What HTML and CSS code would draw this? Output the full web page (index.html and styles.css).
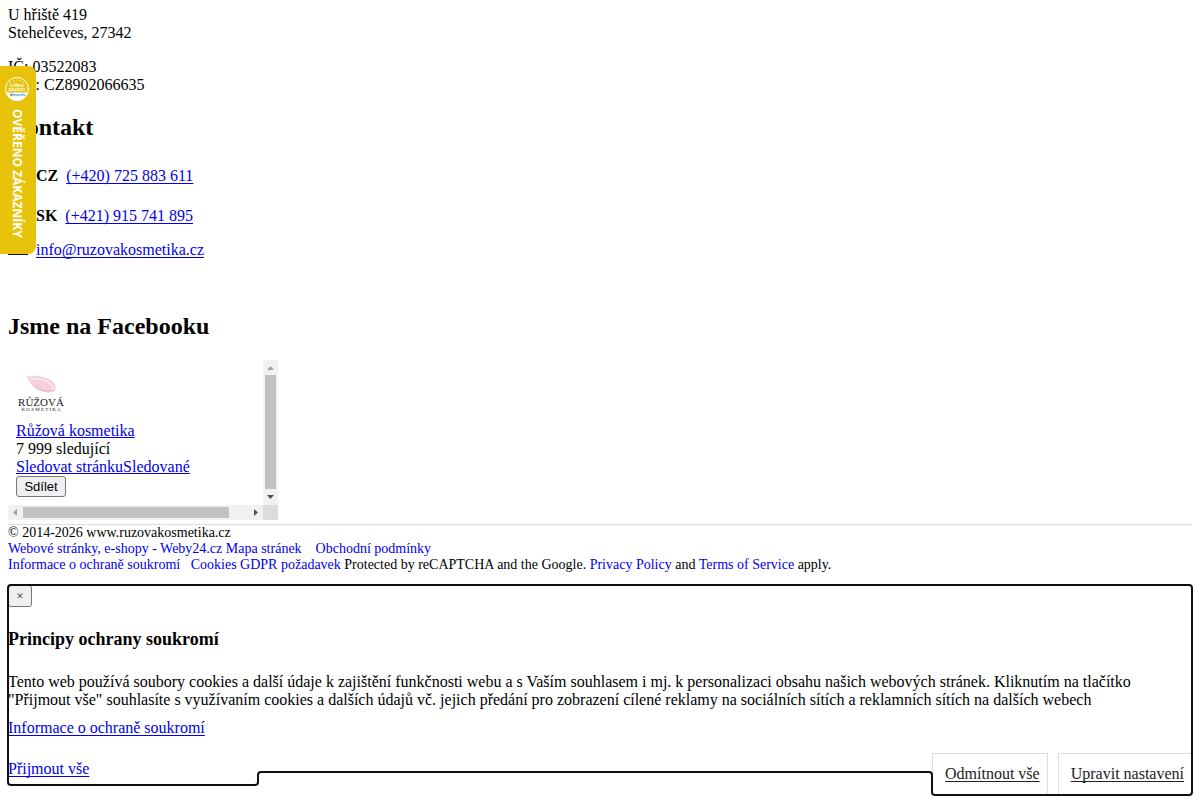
FILE: index.html
```
<!DOCTYPE html>
<html lang="cs">

<head>
    <meta charset="UTF-8">
    <meta name="viewport" content="width=device-width, initial-scale=1.0">
    <title>Růžová kosmetika</title>
    <link rel="stylesheet" href="styles.css">
</head>

<body>
    <section class="company">
        <p>U hřiště 419<br>Stehelčeves, 27342</p>
        <p>IČ: 03522083<br>DIČ: CZ8902066635</p>
    </section>

    <section class="contact">
        <h2>Kontakt</h2>
        <p class="contact-row phone"><span class="icon"></span><strong>CZ</strong><a href="tel:+420725883611">(+420) 725 883 611</a></p>
        <p class="contact-row phone"><span class="icon"></span><strong>SK</strong><a href="tel:+421915741895">(+421) 915 741 895</a></p>
        <p class="contact-row">
            <svg class="icon" viewBox="0 0 20 10" aria-hidden="true"><path d="M0 0h20v10H0z" fill="#111"/><path d="M1 1l9 6 9-6" stroke="#fff" fill="none"/></svg>
            <a href="mailto:info@ruzovakosmetika.cz">info@ruzovakosmetika.cz</a>
        </p>
    </section>

    <section class="facebook">
        <h2>Jsme na Facebooku</h2>
        <div class="fb-frame">
            <div class="fb-content">
                <svg class="fb-logo" viewBox="0 0 50 50" role="img" aria-label="Růžová kosmetika">
                    <path d="M11 8c4 1 7-1 12 0 6 2 10 2 14 6 3 3 4 7 1 9-3 2-8 2-13 0-6-2-9-5-11-9-1-2-3-3-3-6z" fill="#f5cfdb"/>
                    <path d="M14 10c7 2 12 0 18 4 3 2 5 4 5 7" stroke="#fae5ec" stroke-width="2" fill="none"/>
                    <path d="M18 17c6 6 13 7 20 5" stroke="#e9b5c6" fill="none"/>
                    <text x="25" y="38" class="logo-name">RŮŽOVÁ</text>
                    <text x="25" y="43" class="logo-sub">K O S M E T I K A</text>
                </svg>
                <a href="#">Růžová kosmetika</a>
                <div>7 999 sledující</div>
                <div><a href="#">Sledovat stránku</a><a href="#">Sledované</a></div>
                <button type="button">Sdílet</button>
            </div>
            <div class="scroll-y">
                <svg viewBox="0 0 15 15"><path d="M4 10h7L7.500 6z" fill="#a3a3a3"/></svg>
                <span class="thumb"></span>
                <svg viewBox="0 0 15 15"><path d="M4 5h7L7.500 9z" fill="#505050"/></svg>
            </div>
            <div class="scroll-x">
                <svg viewBox="0 0 15 15"><path d="M9 4v7L5 7.500z" fill="#a3a3a3"/></svg>
                <span class="thumb"></span>
                <svg viewBox="0 0 15 15"><path d="M6 4v7l4-3.500z" fill="#505050"/></svg>
            </div>
            <div class="scroll-corner"></div>
        </div>
    </section>

    <footer>
        © 2014-2026 www.ruzovakosmetika.cz<br>
        <a href="#">Webové stránky, e-shopy - Weby24.cz</a> <a href="#">Mapa stránek</a> &nbsp;&nbsp; <a href="#">Obchodní podmínky</a><br>
        <a href="#">Informace o ochraně soukromí</a> &nbsp; <a href="#">Cookies</a> <a href="#">GDPR požadavek</a>
        Protected by reCAPTCHA and the Google. <a href="#">Privacy Policy</a> and <a href="#">Terms of Service</a> apply.
    </footer>

    <div class="cookie-dialog" role="dialog" aria-labelledby="cookieTitle">
        <button type="button" class="close" aria-label="Zavřít">×</button>
        <h3 id="cookieTitle">Principy ochrany soukromí</h3>
        <p>Tento web používá soubory cookies a další údaje k zajištění funkčnosti webu a s Vaším souhlasem i mj. k personalizaci obsahu našich webových stránek. Kliknutím na tlačítko "Přijmout vše" souhlasíte s využívaním cookies a dalších údajů vč. jejich předání pro zobrazení cílené reklamy na sociálních sítích a reklamních sítích na dalších webech</p>
        <a href="#">Informace o ochraně soukromí</a>
        <div class="cookie-actions">
            <div class="accept"><a href="#">Přijmout vše</a></div>
            <div class="options">
                <a href="#">Odmítnout vše</a>
                <a href="#">Upravit nastavení</a>
            </div>
        </div>
    </div>

    <aside class="verified">
        <svg viewBox="0 0 24 24" aria-hidden="true">
            <circle cx="12" cy="12" r="11.500" fill="#e8c30b" stroke="#fff"/>
            <path d="M1 15.500h22a11.500 11.500 0 0 1-22 0z" fill="#fff"/>
            <path d="M5 5.500h1M8 3.500h1M11.500 3h1M15 3.500h1M18 5.500h1" stroke="#fff" stroke-width="1"/>
            <text x="12" y="10" class="seal-text">OVĚŘENO</text>
            <text x="12" y="14" class="seal-text">ZÁKAZNÍKY</text>
            <circle cx="6" cy="18" r="1.200" fill="#f08a24"/>
            <text x="13" y="19" class="seal-brand">Heureka</text>
        </svg>
        <span>OVĚŘENO ZÁKAZNÍKY</span>
    </aside>
</body>

</html>
```
FILE: styles.css
```
body {
    margin: 0;
    padding: 6px 8px 28px;
    font-family: "Liberation Serif", serif;
    font-size: 16px;
    line-height: 18px;
    color: #000;
    background-color: #fff;
}

a {
    color: #0000ee;
}

p {
    margin: 0 0 16px;
}

h2 {
    margin: 20px 0;
    font-size: 24px;
    line-height: 27px;
}

.contact-row {
    display: flex;
    align-items: center;
    gap: 8px;
}

.phone {
    height: 30px;
    margin-bottom: 10px;
}

.contact-row:last-child {
    margin-bottom: 54px;
}

.contact-row strong {
    margin-left: -8px;
}

.contact-row .icon {
    width: 20px;
    height: 10px;
    margin-right: 8px;
}

.contact-row svg.icon {
    margin-right: 0;
}

.contact-row a,
.cookie-dialog a {
    text-underline-offset: 2px;
    text-decoration-skip-ink: none;
}

/* Facebook box */
.fb-frame {
    display: grid;
    grid-template-columns: 1fr 15px;
    grid-template-rows: 1fr 15px;
    width: 270px;
    height: 160px;
}

.fb-content {
    padding: 8px 8px 0;
}

.fb-logo {
    display: block;
    width: 50px;
    height: 50px;
    margin-bottom: 4px;
}

.logo-name {
    font-size: 11px;
    text-anchor: middle;
    fill: #222;
}

.logo-sub {
    font-size: 5px;
    text-anchor: middle;
    fill: #222;
}

.fb-content button {
    display: block;
    width: 50px;
    padding: 1px 0;
    font-family: "Liberation Sans", sans-serif;
    font-size: 13px;
    line-height: 17px;
}

button {
    border: 1px solid #767676;
    border-radius: 3px;
    background-color: #efefef;
    color: #000;
}

.scroll-x,
.scroll-y {
    display: flex;
    background-color: #f1f1f1;
}

.scroll-y {
    flex-direction: column;
}

.scroll-x svg,
.scroll-y svg {
    flex: none;
    width: 15px;
    height: 15px;
}

.scroll-y .thumb {
    flex: 1;
    margin: 0 2px 1px;
    background-color: #c1c1c1;
}

.scroll-x .thumb {
    width: 206px;
    margin: 2px auto 2px 0;
    background-color: #c1c1c1;
}

.scroll-corner {
    background-color: #dcdcdc;
}

footer {
    margin: 4px 0 12px;
    border-top: 1px solid #e2d9dc;
    font-size: 14px;
    line-height: 16px;
}

footer a {
    text-decoration: none;
}

/* Cookie dialog */
.cookie-dialog {
    outline: #101010 auto 1px;
}

.close {
    display: block;
    width: 24px;
    height: 22px;
    padding: 0;
    font-family: "Liberation Serif", serif;
    font-size: 13px;
    color: #222;
}

.cookie-dialog h3 {
    margin: 22px 0;
    font-size: 18px;
    line-height: 20px;
}

.cookie-dialog p {
    margin: 24px 0 10px;
}

/* the buttons hang below the row, the outline follows them */
.cookie-actions {
    display: flex;
    justify-content: space-between;
    align-items: flex-start;
    height: 19px;
    margin-top: 16px;
}

.accept {
    width: 250px;
    padding: 7px 0;
}

.options {
    display: flex;
    gap: 10px;
}

.options a {
    padding: 11px 7px 11px 12px;
    border: 1px solid #ddd;
    color: #222;
}

/* Badge on the left edge */
.verified {
    position: fixed;
    top: 66px;
    left: 0;
    display: flex;
    flex-direction: column;
    align-items: center;
    gap: 8px;
    box-sizing: border-box;
    width: 36px;
    height: 188px;
    padding: 11px 2px 0 0;
    border-radius: 0 8px 8px 0;
    background-color: #e8c30b;
    color: #fff;
}

.verified svg {
    width: 24px;
    height: 24px;
}

.verified span {
    writing-mode: vertical-rl;
    font-family: "Open Sans", sans-serif;
    font-size: 12px;
    font-weight: bold;
    white-space: nowrap;
}

.seal-text,
.seal-brand {
    font-family: Lato, sans-serif;
    font-size: 3px;
    font-weight: bold;
    text-anchor: middle;
    fill: #fff;
}

.seal-brand {
    font-size: 4px;
    fill: #2a9fd8;
}
```
